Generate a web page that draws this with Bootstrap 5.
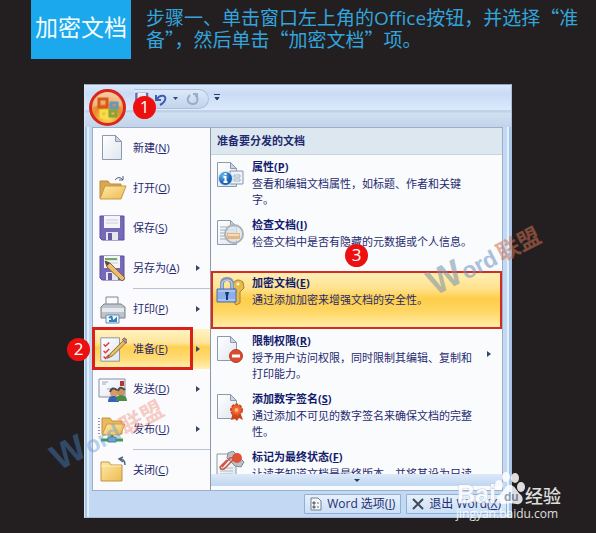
<!DOCTYPE html>
<html lang="zh-CN">
<head>
<meta charset="utf-8">
<meta name="viewport" content="width=device-width, initial-scale=1">
<title>加密文档</title>
<link href="https://cdn.jsdelivr.net/npm/bootstrap@5.3.0/dist/css/bootstrap.min.css" rel="stylesheet">
<style>
body{background:#231f20;font-family:"Open Sans","Noto Sans CJK SC",sans-serif;color:#1f2a70}
.page{min-height:533px}
.intro{padding-left:31px;gap:15px}
.tag{width:100px;height:59px;background:#1ca8ec;color:#f2fdff;font-size:23px;line-height:55px;flex:none}
.step{color:#32a5dc;font-size:19px;line-height:21px;padding-top:6px;font-family:"Noto Sans CJK SC",sans-serif}
.step span{font-family:"Open Sans",sans-serif;line-height:1}
.stage{padding:25px 84px 16px}
.win{background:#c3d8f2;border:1px solid #a9bfdb;border-top-color:#8fa6bf;border-left:1px solid #d4e6f8;box-shadow:inset 2px 0 #a4c6e8,inset 4px 0 #e4effa,inset -2px 0 #a4c6e8,inset -4px 0 #e4effa}
.topbar{height:42px;background:linear-gradient(#dbe8fa 0,#c9dbf5 20%,#dceafc 60%,#b9cbe0 61%,#d0e0f2 68%,#c2d4ea 100%);padding-left:4px}
.orb{width:37px;height:37px;padding:0;border:0;background:none;margin-top:4px}
.quick{height:20px;margin:4px 0 0 8px;padding:0 9px 0 1px;border:1px solid #abc1de;border-left:0;border-radius:0 11px 11px 0;background:linear-gradient(#dce9f9,#c2d4ec);gap:2px}
.quick button,.more{border:0;background:none;padding:0;line-height:0}
.panes{margin:0 8px 0 7px;background:#fafbfd;border:1px solid #9daec7}
.side{width:118px;flex:none;border-right:1px solid #8b98ad;background:#fbfbfd}
.side-item{height:40px;width:100%;border:0;background:none;padding:0 9px 0 5px;gap:6px;color:#1f2a70;text-align:left}
.side-item span{font-size:11px;line-height:18px;flex:1;white-space:nowrap}
.side-item.picked{background:linear-gradient(#fff3c4 0,#ffe59a 35%,#ffd050 45%,#ffdc78 75%,#fff0b4 100%)}
.rule{height:1px;background:#b9c4d2;margin-left:40px}
.pane-title{height:27px;font-size:11px;font-weight:700;line-height:26px;background:#dde7ef;border-bottom:1px solid #c9d3de;padding-left:6px;margin:0}
.opt{height:58px;width:100%;border:0;background:none;padding:3px 6px 0 5px;gap:7px;text-align:left;color:#1f2a70}
.opt strong{font-size:11px;line-height:18px;display:block;color:#141c6e}
.opt small{font-size:11px;line-height:16px;display:block}
.opt svg{margin-top:3px}
.opt-text{flex:0 1 221px}
.opt.hot{background:linear-gradient(#fff0bb 0,#ffe28e 30%,#fdce4b 48%,#ffd765 70%,#fff0b0 100%);box-shadow:inset 0 0 0 2px #d52b20}
.opt.cut{height:29px;overflow:hidden}
.scroller{height:12px;border:0;background:linear-gradient(#dbe8f8,#c1d6f1);line-height:0;width:100%}
.foot{height:26px;padding:3px 4px 3px 0;gap:5px}
.foot button{height:20px;border:1px solid #92aed2;background:linear-gradient(#e6f0fc,#cbdff6);padding:0 5px 0 4px;font-size:12px;line-height:18px;color:#252e70;gap:4px;border-radius:1px;white-space:nowrap}
.num{position:absolute;width:23px;height:23px;border-radius:50%;background:#ed1010;color:#fff;font-size:17px;line-height:22px;text-align:center}
.n1{left:48px;top:11px}.n2{left:-18px;top:253px}.n3{left:260px;top:159px}
.ring{position:absolute;left:7px;top:242px;width:101px;height:43px;border:3px solid #d9201a;pointer-events:none}
.wm{position:absolute;pointer-events:none;overflow:visible}
.wm-a{left:-37px;top:300px}.wm-b{right:-31px;top:127px}.wm-c{right:-55px;bottom:-11px}
</style>
<script src="https://cdn.jsdelivr.net/npm/bootstrap@5.3.0/dist/js/bootstrap.bundle.min.js"></script>
</head>
<body>
<svg width="0" height="0" class="position-absolute" aria-hidden="true"><defs>
<linearGradient id="gold" x1="0" y1="0" x2="1" y2="1"><stop stop-color="#ffe9a6"/><stop offset="1" stop-color="#ecbb54"/></linearGradient>
<linearGradient id="paper" x1="0" y1="0" x2="1" y2="1"><stop stop-color="#fff"/><stop offset="1" stop-color="#dfe6ef"/></linearGradient>
<radialGradient id="blue" cx=".35" cy=".3"><stop stop-color="#72b9ed"/><stop offset="1" stop-color="#1463b4"/></radialGradient>
<radialGradient id="orbg" cx=".5" cy=".8" r=".8"><stop stop-color="#ffe05c"/><stop offset=".5" stop-color="#e98a29"/><stop offset="1" stop-color="#f5c69a"/></radialGradient>
<g id="sheet"><path d="M1.500 1.500h13l6 6v18h-19z" fill="url(#paper)" stroke="#8b9aac"/><path d="M14.500 1.500v6h6z" fill="#c9d4e0" stroke="#8b9aac"/></g>
<g id="disk"><path d="M1 2h24v24H3l-2-2z" fill="#7769b8" stroke="#5d4f9d"/><path d="M5 2h16v12H5z" fill="#f4f5f9"/><path d="M7 6h12M7 9h12" stroke="#c8cedb"/><path d="M7 18h12v8H7z" fill="#e4e6ee"/><path d="M9 19h4v7H9z" fill="#6759a5"/></g>
<g id="pencil"><path d="M27 4 13 18l-4 6 6-3L29 7z" fill="#e9bd62" stroke="#876330"/><path d="m25 4 2-2 4 3-2 3z" fill="#ad9298" stroke="#7b5a61"/></g>
</defs></svg>
<div class="page">
<header class="intro d-flex align-items-start">
<div class="tag text-center">加密文档</div>
<p class="step mb-0">步骤一、单击窗口左上角的<span>Office</span>按钮，并选择“准备”，然后单击“加密文档”项。</p>
</header>
<main class="stage">
<div class="win position-relative">
<div class="topbar d-flex align-items-start">
<button class="orb" aria-label="Office"><svg width="37" height="37" viewBox="0 0 37 37"><circle cx="18.500" cy="18.500" r="17" fill="url(#orbg)" stroke="#d9271f" stroke-width="3"/><path d="M4 18Q18 12 33 18A14 14 0 0 0 4 18" fill="#fff" opacity=".25"/><g fill="none" stroke-width="3"><path d="M10 10h8v8h-8z" stroke="#d5591d"/><path d="M22 14h6v5h-6z" stroke="#6598bc"/><path d="M12 22h6v6h-6z" stroke="#f5df43"/><path d="M21 22h6v5h-6z" stroke="#84a43d"/></g></svg></button>
<div class="quick d-flex align-items-center">
<button aria-label="保存"><svg width="14" height="14" viewBox="0 0 27 27"><use href="#disk"/></svg></button>
<button aria-label="撤销" class="ms-1"><svg width="12" height="13" viewBox="0 0 12 13"><path d="M1 2v5h5M2 6c3-5 10-4 8 1-1 3-3 4-5 5" fill="none" stroke="#405db1" stroke-width="2"/></svg></button>
<button aria-label="撤销列表"><svg width="11" height="6"><path d="M4 1h5L6.500 4z" fill="#344970"/></svg></button>
<button aria-label="重复" class="ms-1"><svg width="13" height="13" viewBox="0 0 13 13"><path d="M4 2c-5 5-1 9 3 9 5 0 6-6 2-9M7 1h4v4" fill="none" stroke="#9badc7" stroke-width="2"/></svg></button>
</div>
<button class="more ms-1 mt-2" aria-label="自定义"><svg width="8" height="9"><path d="M1 1.500h6M2 4.500h4L4 7z" fill="#283f6c" stroke="#283f6c"/></svg></button>
</div>
<div class="panes d-flex">
<nav class="side">
<button class="side-item d-flex align-items-center"><svg width="29" height="29" viewBox="-3 0 29 29"><use href="#sheet"/></svg><span>新建(<u>N</u>)</span></button>
<button class="side-item d-flex align-items-center"><svg width="29" height="29" viewBox="0 0 29 29"><path d="M2 24V7h8l2 3h11v14z" fill="#d8a84d" stroke="#b98d42"/><path d="m2 25 5-13h21l-5 13z" fill="url(#gold)" stroke="#c79844"/><path d="M17 6q4-5 8 0m0-4v4h-4" fill="none" stroke="#52637c"/></svg><span>打开(<u>O</u>)</span></button>
<button class="side-item d-flex align-items-center"><svg width="29" height="29" viewBox="-1 0 29 29"><use href="#disk"/></svg><span>保存(<u>S</u>)</span></button>
<button class="side-item d-flex align-items-center"><svg width="29" height="29" viewBox="-1 0 29 29"><use href="#disk"/><path d="M6 5h12" stroke="#75aa65" stroke-width="2"/><path d="m6 7 2 6 15 14 3-3L11 9z" fill="#edbd6b" stroke="#88653b"/><path d="m6 7 2 5 3-3z" fill="#4d4a48"/></svg><span>另存为(<u>A</u>)</span><svg width="5" height="8"><path d="M0 1v6l4-3z" fill="#34466e"/></svg></button>
<div class="rule"></div>
<button class="side-item d-flex align-items-center"><svg width="29" height="29" viewBox="0 0 29 29"><path d="M8 12V2h12v10" fill="#f8fafc" stroke="#7c8795"/><path d="m3 12 3-3h17l4 3v11H3z" fill="#bcc3ca" stroke="#7b838c"/><path d="M4 13h22v4H4z" fill="#e5e8ec"/><path d="M8 20h13v8H8z" fill="#eff8ff" stroke="#6f8cac"/><path d="M11 23q3-3 3 1t4 0v2h-7" fill="none" stroke="#3182be" stroke-width="2"/></svg><span>打印(<u>P</u>)</span><svg width="5" height="8"><path d="M0 1v6l4-3z" fill="#34466e"/></svg></button>
<button class="side-item picked d-flex align-items-center"><svg width="29" height="29" viewBox="-1 0 31 29"><path d="M2 2h20v25H2z" fill="url(#paper)" stroke="#8792a2"/><path d="m5 9 2 2 4-4m-6 9 2 2 4-4m-6 8 2 2 4-4" fill="none" stroke="#d73a3f" stroke-width="1.500"/><use href="#pencil"/></svg><span>准备(<u>E</u>)</span><svg width="5" height="8"><path d="M0 1v6l4-3z" fill="#34466e"/></svg></button>
<button class="side-item d-flex align-items-center"><svg width="29" height="29" viewBox="0 0 29 29"><path d="M1 4h26v18H1z" fill="url(#paper)" stroke="#8290a7"/><path d="M4 7h6M4 9h4M9 14h9" stroke="#9aa8bb"/><path d="M22 6h4v5h-4z" fill="#bd3034"/><circle cx="16" cy="18" r="4" fill="#d89b6c"/><path d="M10 27q0-7 6-6 4 0 5 6z" fill="#3664b4"/><circle cx="23" cy="17" r="4" fill="#c89463"/><path d="M18 26q0-6 5-6 6 0 6 6z" fill="#4d8b46"/><path d="M12 17q2-6 7-2M20 16q2-6 7-1" fill="none" stroke="#51483f" stroke-width="2"/></svg><span>发送(<u>D</u>)</span><svg width="5" height="8"><path d="M0 1v6l4-3z" fill="#34466e"/></svg></button>
<button class="side-item d-flex align-items-center"><svg width="29" height="29" viewBox="0 0 29 29"><path d="M4 19V3h8l2 3h10v13z" fill="#eab95e" stroke="#c3903c"/><path d="m4 20 5-11h18l-5 11z" fill="url(#gold)" stroke="#d09b43"/><path d="M1 3v17" stroke="#8994a3" stroke-dasharray="1 2" stroke-width="2"/><path d="M14 20v5M3 25h22" stroke="#439958" stroke-width="3"/><path d="M10 22h8v5h-8z" fill="#72aaca" stroke="#4c7799"/></svg><span>发布(<u>U</u>)</span><svg width="5" height="8"><path d="M0 1v6l4-3z" fill="#34466e"/></svg></button>
<div class="rule"></div>
<button class="side-item d-flex align-items-center"><svg width="29" height="29" viewBox="0 0 29 29"><path d="M3 25V6h8l2 3h11v16z" fill="url(#gold)" stroke="#bd954a"/><path d="M3 10h20" stroke="#fff0b9"/><path d="M27 9q0-6-5-6m3-2-4 2 4 3" fill="none" stroke="#51647f" stroke-width="1.500"/></svg><span>关闭(<u>C</u>)</span></button>
</nav>
<section class="flex-grow-1 d-flex flex-column">
<h2 class="pane-title">准备要分发的文档</h2>
<button class="opt d-flex align-items-start"><svg class="flex-shrink-0" width="29" height="29" viewBox="0 0 29 29"><use href="#sheet"/><path d="M14 10h13v13H14z" fill="#edf3f9" stroke="#8796aa"/><path d="M18 14h6v2h-6zm0 4h6v2h-6z" fill="#fff" stroke="#9caec4"/><circle cx="9.500" cy="17.500" r="7" fill="url(#blue)" stroke="#d7e8f7"/><path d="M9.500 12v2m-2 2h2v5m-2 0h4" fill="none" stroke="#fff" stroke-width="2"/></svg><span class="opt-text"><strong>属性(<u>P</u>)</strong><small>查看和编辑文档属性，如标题、作者和关键字。</small></span></button>
<button class="opt d-flex align-items-start"><svg class="flex-shrink-0" width="29" height="29" viewBox="0 0 29 29"><use href="#sheet"/><path d="M4 8h9M4 11h14M4 14h14M4 17h14M4 20h14" stroke="#a0acba"/><circle cx="18" cy="15" r="9" fill="#d7e4ef" fill-opacity=".75" stroke="#aeb2b8" stroke-width="2"/><path d="M11 14h13v6H11z" fill="#e8b67c"/><path d="M12 16h11" stroke="#fff"/></svg><span class="opt-text"><strong>检查文档(<u>I</u>)</strong><small>检查文档中是否有隐藏的元数据或个人信息。</small></span></button>
<button class="opt hot d-flex align-items-start"><svg class="flex-shrink-0" width="29" height="29" viewBox="0 0 29 29"><path d="M18 5q4-4 9 0l1 6-4 4v11l-4 2-2-3 2-3-2-3 2-3v-3l-3-3z" fill="#e4bb4b" stroke="#ad812e"/><circle cx="22" cy="7" r="1.500" fill="#fff6c9"/><path d="M6 13V7q0-5 5-5t5 5v6" fill="none" stroke="#8096b9" stroke-width="4"/><path d="M6 13V7q0-4 5-4t5 4v6" fill="none" stroke="#d6e1f3"/><path d="M1 12h19v13H1z" fill="#8daee7" stroke="#4e70b0"/><path d="M2 14h17M2 23h17" stroke="#c8daf9"/><path d="M9 15h4l-1 4v4h-2v-4z" fill="#13377a"/></svg><span class="opt-text"><strong>加密文档(<u>E</u>)</strong><small>通过添加加密来增强文档的安全性。</small></span></button>
<button class="opt d-flex align-items-start"><svg class="flex-shrink-0" width="29" height="29" viewBox="0 0 29 29"><use href="#sheet"/><circle cx="20" cy="21" r="6.500" fill="#dc4a2f" stroke="#b93e2b"/><path d="M16 21h8" stroke="#fff" stroke-width="3"/></svg><span class="opt-text"><strong>限制权限(<u>R</u>)</strong><small>授予用户访问权限，同时限制其编辑、复制和打印能力。</small></span><svg class="ms-auto me-1 mt-3" width="5" height="15"><path d="M0 3v6l4-3z" fill="#34466e"/></svg></button>
<button class="opt d-flex align-items-start"><svg class="flex-shrink-0" width="29" height="29" viewBox="0 0 29 29"><use href="#sheet"/><path d="m17 19-2 8 4-1 2 2 2-3 4 2-3-8z" fill="#c94520"/><circle cx="20.500" cy="17" r="5.500" fill="#ed642f" stroke="#cb4b22" stroke-width="2" stroke-dasharray="3 1"/><circle cx="20.500" cy="17" r="2" fill="#ffb083"/></svg><span class="opt-text"><strong>添加数字签名(<u>S</u>)</strong><small>通过添加不可见的数字签名来确保文档的完整性。</small></span></button>
<button class="opt cut d-flex align-items-start"><svg class="flex-shrink-0" width="29" height="29" viewBox="0 0 29 29"><path d="M1 3h19v24H1z" fill="url(#paper)" stroke="#8d98a6"/><path d="M4 17h13M4 20h13M4 23h13" stroke="#aeb8c4"/><path d="m12 2 5-2 11 11-3 5-6-1-8-8z" fill="#b9bec7" stroke="#838b97"/><circle cx="21" cy="7" r="5" fill="#df5337"/><path d="m6 16 8-9q3-1 3 2l-9 9q-4 1-4-2l7-7" fill="none" stroke="#cc5545" stroke-width="1.500"/></svg><span class="opt-text"><strong>标记为最终状态(<u>F</u>)</strong><small>让读者知道文档是最终版本，并将其设为只读的。</small></span></button>
<button class="scroller" aria-label="向下滚动"><svg width="6" height="5"><path d="M0 1h6L3 4z" fill="#263a67"/></svg></button>
</section>
</div>
<div class="foot d-flex justify-content-end">
<button class="d-flex align-items-center"><svg width="14" height="14" viewBox="0 0 14 14"><path d="M2 1h7l3 3v9H2z" fill="#f5f7f9" stroke="#727e8e"/><path d="M4 5h2v2H4zm0 4h2v2H4zM8 6h2M8 10h2" fill="#687382" stroke="#687382"/></svg><span>Word 选项(<u>I</u>)</span></button>
<button class="d-flex align-items-center"><svg width="14" height="14" viewBox="0 0 14 14"><path d="m2 2 10 10M12 2 2 12" stroke="#424a58" stroke-width="2"/></svg><span>退出 Word(<u>X</u>)</span></button>
</div>
<div class="ring"></div>
<span class="num n1">1</span><span class="num n2">2</span><span class="num n3">3</span>
<svg class="wm wm-a" width="122" height="90" viewBox="0 0 122 90"><g transform="translate(11 86) rotate(-28)" font-family="Liberation Sans, Noto Sans CJK SC, sans-serif" font-weight="700" opacity=".42"><text font-size="36" fill="#4687cc">W</text><text x="35" font-size="23" fill="#5c99d5">ord</text><text x="75" font-size="23" fill="#ef8d79">联盟</text></g></svg>
<svg class="wm wm-b" width="122" height="90" viewBox="0 0 122 90"><g transform="translate(15 84) rotate(-27)" font-family="Liberation Sans, Noto Sans CJK SC, sans-serif" font-weight="700" opacity=".55"><text font-size="36" fill="#7792a5">W</text><text x="35" font-size="23" fill="#6d91c2">ord</text><text x="75" font-size="23" fill="#cc6f51">联盟</text></g></svg>
<svg class="wm wm-c" width="110" height="60" viewBox="0 0 110 60"><g fill="#fff" opacity=".85" font-family="Liberation Sans, Noto Sans CJK SC, sans-serif"><text x="1" y="35" font-size="25" font-weight="700" stroke="#b4c6de" stroke-width="1" paint-order="stroke">Bai</text><g><ellipse cx="43" cy="17" rx="4" ry="5"/><ellipse cx="50" cy="9" rx="4" ry="5"/><ellipse cx="59" cy="10" rx="4" ry="5"/><ellipse cx="65" cy="19" rx="4" ry="5"/><path d="M54 17c5 0 7 7 11 10 4 5 0 10-5 9-4-1-8-1-12 0-6 1-9-5-5-9 5-3 6-10 11-10"/></g><text x="48" y="33" font-size="12" font-weight="700" fill="#8295b0">du</text><text x="69" y="35" font-size="18" font-weight="500">经验</text><text x="0" y="50" font-size="12" font-family="Open Sans, sans-serif">jingyan.baidu.com</text></g></svg>
</div>
</main>
</div>
</body>
</html>
